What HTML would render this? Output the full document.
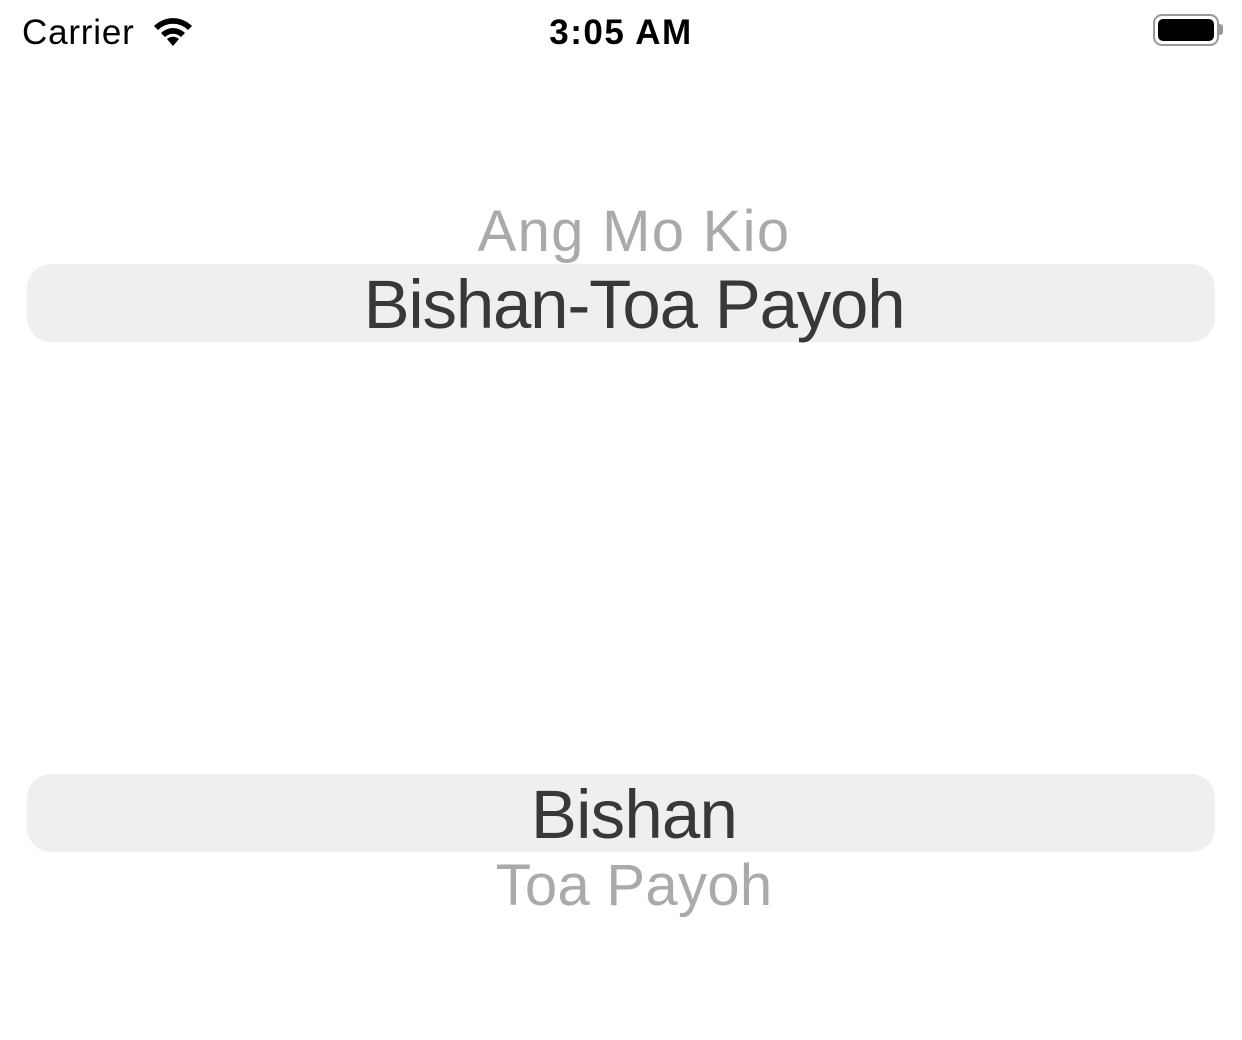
<!DOCTYPE html>
<html><head><meta charset="utf-8"><style>
body{margin:0;width:1242px;height:1040px;background:#fff;position:relative;overflow:hidden;font-family:"Liberation Sans",sans-serif}
.t{position:absolute;left:13px;width:1242px;text-align:center;line-height:1;white-space:nowrap}
.hl{position:absolute;left:27px;width:1188px;height:78px;background:#efefef;border-radius:24px}
</style></head><body>
<div class="t" style="left:22px;width:auto;top:15px;font-size:35px;letter-spacing:0.8px;color:#000;text-align:left">Carrier</div>
<svg style="position:absolute;left:150px;top:12px" width="46" height="36" viewBox="0 0 46 36">
<path d="M23 34 L29 27 A9 9 0 0 0 17 27 Z" fill="#000"/>
<path d="M11 21 A17 17 0 0 1 35 21 L31 25 A11.5 11.5 0 0 0 15 25 Z" fill="#000"/>
<path d="M4 14 A27 27 0 0 1 42 14 L38 18 A21 21 0 0 0 8 18 Z" fill="#000"/>
</svg>
<div class="t" style="left:0;top:15px;font-size:35px;font-weight:bold;letter-spacing:1.5px;color:#000">3:05 AM</div>
<div style="position:absolute;left:1153px;top:14px;width:62px;height:28px;border:2px solid #999;border-radius:9px;box-sizing:content-box"></div>
<div style="position:absolute;left:1158px;top:19px;width:56px;height:22px;background:#000;border-radius:5px"></div>
<div style="position:absolute;left:1219px;top:24px;width:4px;height:11px;background:#999;border-radius:0 3px 3px 0"></div>
<div class="hl" style="top:264px"></div>
<div class="hl" style="top:774px"></div>
<div class="t" style="top:203px;font-size:58px;letter-spacing:1.3px;color:#aaa">Ang Mo Kio</div>
<div class="t" style="top:270px;font-size:69px;letter-spacing:-1.2px;color:#383838">Bishan-Toa Payoh</div>
<div class="t" style="top:780px;font-size:69px;letter-spacing:-0.8px;color:#383838">Bishan</div>
<div class="t" style="top:857px;font-size:58px;letter-spacing:0.3px;color:#aaa">Toa Payoh</div>
</body></html>
